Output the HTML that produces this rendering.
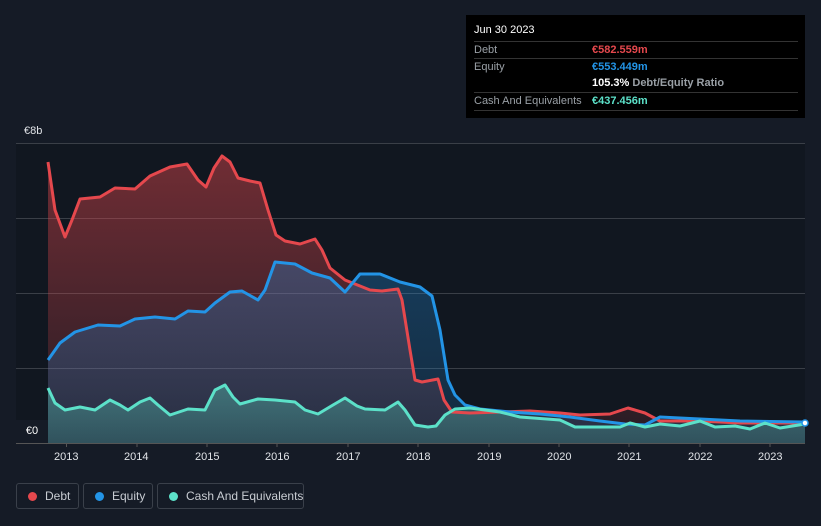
<!DOCTYPE html>
<html><head><meta charset="utf-8"><style>
html,body{margin:0;width:821px;height:526px;overflow:hidden}
body{background:#151b26;font-family:"Liberation Sans",sans-serif;position:relative}
.tt{position:absolute;left:466px;top:15px;width:339px;height:103px;background:#000;color:#fff;font-size:11px}
.row{position:absolute;left:8px;width:324px;height:17px;border-top:1px solid #333;line-height:17px;white-space:nowrap}
.row span{position:absolute;left:118px;font-weight:bold}
.lbl{color:#9aa0a6}
.leg{position:absolute;top:483px;height:26px;border:1px solid #3a404a;border-radius:3px;color:#c8ccd2;font-size:12px;line-height:24px;box-sizing:border-box;white-space:nowrap}
.leg i{position:absolute;top:8px;left:11px;width:9px;height:9px;border-radius:50%}
.ax{position:absolute;top:451px;color:#e0e3e7;font-size:11px}
</style></head><body>
<svg width="821" height="526" style="position:absolute;left:0;top:0">
<defs>
<linearGradient id="gr" x1="0" y1="0" x2="0" y2="1"><stop offset="0" stop-color="#e5484d" stop-opacity=".45"/><stop offset="1" stop-color="#e5484d" stop-opacity=".1"/></linearGradient>
<linearGradient id="gb" x1="0" y1="0" x2="0" y2="1"><stop offset="0" stop-color="#2394e6" stop-opacity=".3"/><stop offset="1" stop-color="#2394e6" stop-opacity=".15"/></linearGradient>
<linearGradient id="gc" x1="0" y1="0" x2="0" y2="1"><stop offset="0" stop-color="#5ce1c9" stop-opacity=".35"/><stop offset="1" stop-color="#5ce1c9" stop-opacity=".2"/></linearGradient>
</defs>
<rect x="16" y="143" width="789" height="300" fill="#111720"/>
<g stroke="#3a3f47" stroke-width="1"><line x1="16" y1="143.5" x2="805" y2="143.5"/><line x1="16" y1="218.5" x2="805" y2="218.5"/><line x1="16" y1="293.5" x2="805" y2="293.5"/><line x1="16" y1="368.5" x2="805" y2="368.5"/><line x1="16" y1="443.5" x2="805" y2="443.5" stroke="#555"/></g>
<g stroke="#555"><line x1="66.5" y1="443" x2="66.5" y2="447"/><line x1="137" y1="443" x2="137" y2="447"/><line x1="207" y1="443" x2="207" y2="447"/><line x1="277" y1="443" x2="277" y2="447"/><line x1="348" y1="443" x2="348" y2="447"/><line x1="418" y1="443" x2="418" y2="447"/><line x1="489" y1="443" x2="489" y2="447"/><line x1="559" y1="443" x2="559" y2="447"/><line x1="629" y1="443" x2="629" y2="447"/><line x1="700" y1="443" x2="700" y2="447"/><line x1="770" y1="443" x2="770" y2="447"/></g>
<path fill="url(#gr)" d="M48,443 L48,162 L55,210 L65,237 L72,220 L80,199 L100,197 L115,188 L135,189 L150,176 L170,167 L187,164 L198,180 L206,187 L214,168 L222,156 L230,162 L238,178 L250,181 L260,183 L268,210 L276,235 L285,241 L300,244 L315,239 L322,250 L330,268 L345,280 L360,286 L370,290 L382,291 L398,289 L402,300 L410,350 L415,380 L422,382 L438,379 L444,400 L452,412 L470,413 L500,412 L530,411 L560,413 L580,415 L610,414 L628,408 L645,413 L660,421 L700,421 L740,423 L770,423 L805,423 L805,443Z"/>
<path fill="url(#gb)" d="M48,443 L48,360 L60,343 L75,332 L98,325 L120,326 L135,319 L155,317 L175,319 L188,311 L205,312 L215,303 L230,292 L242,291 L258,300 L265,290 L275,262 L295,264 L312,273 L330,278 L345,292 L360,274 L380,274 L400,282 L420,287 L432,296 L440,330 L448,380 L455,395 L465,405 L480,409 L510,412 L540,414 L570,417 L600,421 L625,424 L645,425 L660,417 L680,418 L700,419 L740,421 L805,422 L805,443Z"/>
<path fill="url(#gc)" d="M48,443 L48,388 L55,403 L65,410 L80,407 L95,410 L110,400 L120,405 L128,410 L140,402 L150,398 L158,405 L170,415 L188,409 L205,410 L215,390 L225,385 L233,397 L240,404 L258,399 L275,400 L295,402 L305,410 L318,414 L333,405 L345,398 L357,406 L365,409 L385,410 L398,402 L405,410 L415,425 L428,427 L436,426 L445,415 L455,409 L470,408 L500,412 L520,417 L560,420 L575,427 L600,427 L620,427 L630,423 L645,427 L660,424 L680,426 L700,421 L715,427 L735,426 L750,429 L765,423 L780,428 L805,424 L805,443Z"/>
<g fill="none" stroke-width="3" stroke-linejoin="round">
<path stroke="#e5484d" d="M48,162 L55,210 L65,237 L72,220 L80,199 L100,197 L115,188 L135,189 L150,176 L170,167 L187,164 L198,180 L206,187 L214,168 L222,156 L230,162 L238,178 L250,181 L260,183 L268,210 L276,235 L285,241 L300,244 L315,239 L322,250 L330,268 L345,280 L360,286 L370,290 L382,291 L398,289 L402,300 L410,350 L415,380 L422,382 L438,379 L444,400 L452,412 L470,413 L500,412 L530,411 L560,413 L580,415 L610,414 L628,408 L645,413 L660,421 L700,421 L740,423 L770,423 L805,423"/>
<path stroke="#2394e6" d="M48,360 L60,343 L75,332 L98,325 L120,326 L135,319 L155,317 L175,319 L188,311 L205,312 L215,303 L230,292 L242,291 L258,300 L265,290 L275,262 L295,264 L312,273 L330,278 L345,292 L360,274 L380,274 L400,282 L420,287 L432,296 L440,330 L448,380 L455,395 L465,405 L480,409 L510,412 L540,414 L570,417 L600,421 L625,424 L645,425 L660,417 L680,418 L700,419 L740,421 L805,422"/>
<path stroke="#5ce1c9" d="M48,388 L55,403 L65,410 L80,407 L95,410 L110,400 L120,405 L128,410 L140,402 L150,398 L158,405 L170,415 L188,409 L205,410 L215,390 L225,385 L233,397 L240,404 L258,399 L275,400 L295,402 L305,410 L318,414 L333,405 L345,398 L357,406 L365,409 L385,410 L398,402 L405,410 L415,425 L428,427 L436,426 L445,415 L455,409 L470,408 L500,412 L520,417 L560,420 L575,427 L600,427 L620,427 L630,423 L645,427 L660,424 L680,426 L700,421 L715,427 L735,426 L750,429 L765,423 L780,428 L805,424"/>
</g>
<circle cx="805" cy="423" r="3" fill="#fff" stroke="#2394e6" stroke-width="1.5"/>
</svg>
<div style="position:absolute;left:24px;top:125px;color:#e0e3e7;font-size:11px">€8b</div>
<div style="position:absolute;left:16px;top:420px;width:32px;height:23px;background:#151b26;color:#fff;font-size:11px;line-height:23px;text-align:center">€0</div>
<div class="ax" style="left:54px">2013</div><div class="ax" style="left:124px">2014</div><div class="ax" style="left:195px">2015</div><div class="ax" style="left:265px">2016</div><div class="ax" style="left:336px">2017</div><div class="ax" style="left:406px">2018</div><div class="ax" style="left:477px">2019</div><div class="ax" style="left:547px">2020</div><div class="ax" style="left:617px">2021</div><div class="ax" style="left:688px">2022</div><div class="ax" style="left:758px">2023</div>
<div class="tt">
<div style="position:absolute;left:8px;top:9px;">Jun 30 2023</div>
<div class="row" style="top:26px"><b class="lbl" style="font-weight:normal">Debt</b><span style="color:#e5484d">€582.559m</span></div>
<div class="row" style="top:43px"><b class="lbl" style="font-weight:normal">Equity</b><span style="color:#2394e6">€553.449m</span></div>
<div class="row" style="top:60px;border-top:none"><span style="color:#fff">105.3% <b style="color:#9aa0a6">Debt/Equity Ratio</b></span></div>
<div class="row" style="top:77px"><b class="lbl" style="font-weight:normal">Cash And Equivalents</b><span style="color:#5ce1c9">€437.456m</span></div>
<div class="row" style="top:95px;height:0"></div>
</div>
<div class="leg" style="left:16px;width:63px"><i style="background:#e5484d"></i><span style="position:absolute;left:28px">Debt</span></div>
<div class="leg" style="left:83px;width:70px"><i style="background:#2394e6"></i><span style="position:absolute;left:28px">Equity</span></div>
<div class="leg" style="left:157px;width:147px"><i style="background:#5ce1c9"></i><span style="position:absolute;left:28px">Cash And Equivalents</span></div>
</body></html>
